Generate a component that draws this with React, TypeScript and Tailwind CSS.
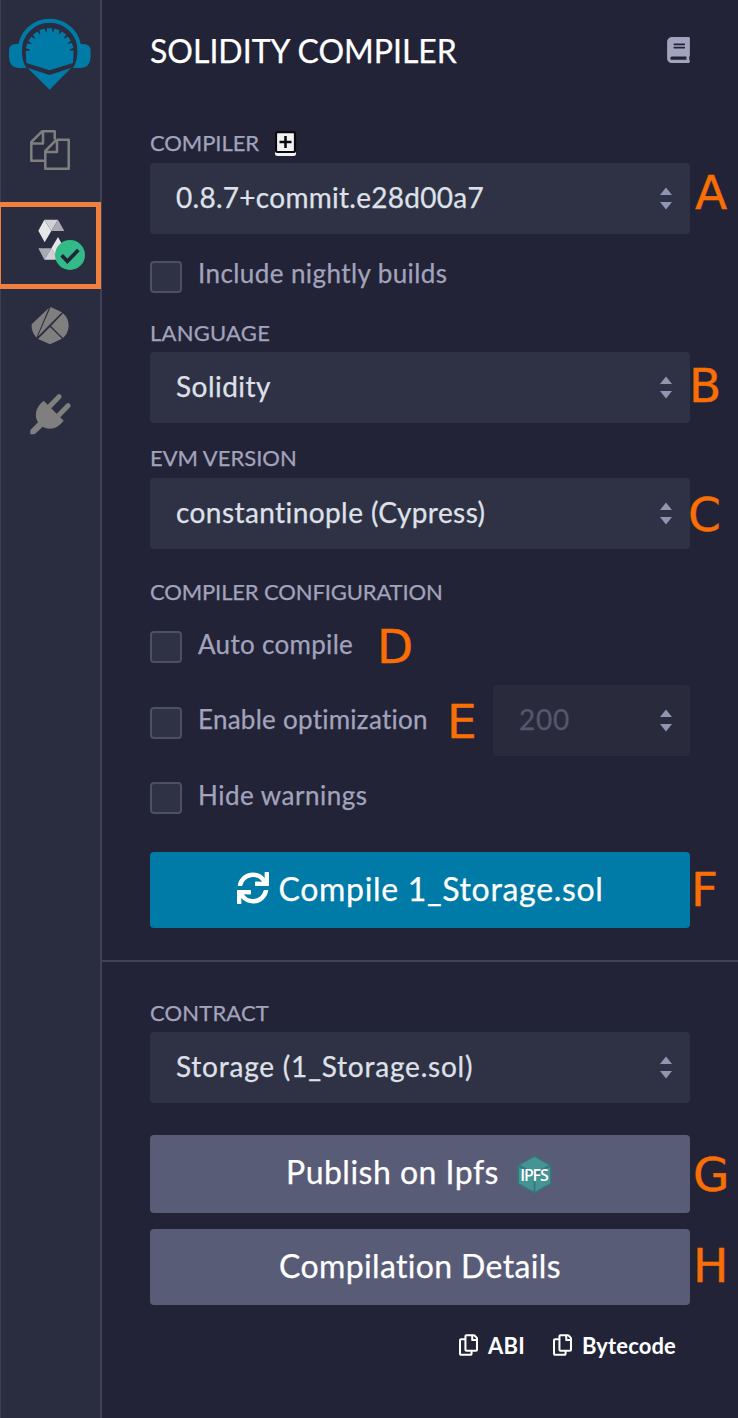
import type { ReactNode } from "react";
import { FaBook, FaRegCopy, FaSync } from "react-icons/fa";

function shellPath() {
  const cx = 149;
  const cy = 156;
  const pts: string[] = [];
  const teeth = 11;
  const start = 190;
  const step = -200 / (teeth - 0.3);
  for (let i = 0; i < teeth; i++) {
    const a = start + step * i;
    const at = (deg: number, r: number) => {
      const t = (deg * Math.PI) / 180;
      return `${(cx + r * Math.cos(t)).toFixed(1)},${(cy - r * Math.sin(t)).toFixed(1)}`;
    };
    pts.push(at(a, 72), at(a + step * 0.66, 72));
    if (i < teeth - 1) pts.push(at(a + step * 0.78, 60), at(a + step * 0.88, 60));
  }
  return `M${pts.join("L")}L219,189L149,211L79,189Z`;
}

function RemixLogo() {
  return (
    <svg className="h-[72px] w-[84px]" viewBox="24 54 252 216" fill="#007aa6">
      <path d="M60 150A89 88 0 0 1 238 150" fill="none" stroke="#007aa6" strokeWidth="12" />
      <path d="M66 132H48Q27 132 27 152V170Q28 203 55 204H79Q64 182 66 145Z" />
      <path d="M232 132H250Q272 132 272 152V170Q270 203 243 204H219Q234 182 232 145Z" />
      <path d={shellPath()} />
      <path d="M82 203L149 225L214 203L149 269Z" />
    </svg>
  );
}

function FilesIcon() {
  return (
    <svg className="h-[40px] w-[40px]" viewBox="0 0 40 40" fill="none" stroke="#7f7f7f" strokeWidth="2.5" strokeLinejoin="round">
      <path d="M24.7 9.5V1.3H12L1.3 12V30.7H15M1.3 13.5H13V1.3" />
      <path d="M26.5 9.7H38.7V38.7H15.3V21L26.5 9.7M15.3 22H27V9.7" />
    </svg>
  );
}

function SolidityIcon() {
  return (
    <svg className="h-[52px] w-[50px]" viewBox="113 88 150 156">
      <path fill="#e6e6e9" d="M117 123L135 90L156 124L136 158Z" />
      <path fill="#d0d0d6" d="M135 90H176L156 124Z" />
      <path fill="#a9aab5" d="M176 90L195 124H156Z" />
      <path fill="#a9aab5" d="M117 176H156L135 210Z" />
      <path fill="#d0d0d6" d="M135 210L156 176L176 210Z" />
      <path fill="#e6e6e9" d="M176 142L195 176L176 210L156 176Z" />
      <circle cx="212" cy="196" r="45" fill="#32ba89" />
      <path d="M187 197L204 215L237 181" fill="none" stroke="#222336" strokeWidth="11" />
    </svg>
  );
}

function KlaytnIcon() {
  return (
    <svg className="h-[38px] w-[38px]" viewBox="94 351 114 114" fill="#7f7f7f">
      <path d="M148 353L96 403Q94 425 110 443Z" />
      <path d="M153 351L187 367L114 440Z" />
      <path d="M190 370Q207 384 207 408Q206 430 190 444L154 408Z" />
      <path d="M151 411L187 446L151 463L115 447Z" />
    </svg>
  );
}

function PlugIcon() {
  return (
    <svg className="h-[41px] w-[41px]" viewBox="89 611 123 123" fill="#7f7f7f">
      <path d="M130 631L190 691Q172 715 148 715Q137 715 127 709L103 732H90V719L113 696Q105 684 107 668Q110 646 130 631Z" />
      <path d="M149 647L176 619M176 674L203 646" stroke="#7f7f7f" strokeWidth="15" strokeLinecap="round" />
    </svg>
  );
}

function VersionAddIcon() {
  return (
    <svg className="h-[25px] w-[22px]" viewBox="0 0 22 25">
      <rect x="0" y="3" width="21" height="22" rx="2.5" fill="#f2f2f2" />
      <rect x="1" y="1.2" width="19" height="19.8" rx="1.5" fill="#f2f2f2" stroke="#0a0a10" strokeWidth="2.2" />
      <path d="M10.5 5V17M4.5 11H16.5" stroke="#0a0a10" strokeWidth="2.6" />
    </svg>
  );
}

function IpfsIcon() {
  return (
    <svg className="h-[39px] w-[35px]" viewBox="0 0 35 39">
      <path d="M17.5 0.5L34.5 10V29L17.5 38.5L0.5 29V10Z" fill="#37777a" />
      <path d="M17.5 2L31.8 10L17.5 18L3.2 10Z" fill="#469394" />
      <path d="M2 12L16.6 20.2V36.5L2 28.3ZM33 12L18.4 20.2V36.5L33 28.3Z" fill="#469394" />
      <text x="17.5" y="26" textAnchor="middle" textLength="28.5" className="fill-white font-['Open_Sans'] text-[16px] font-semibold">
        IPFS
      </text>
    </svg>
  );
}

function SortIcon() {
  return (
    <svg className="mb-px h-[23px] w-[12px]" viewBox="0 0 12 23" fill="#8f95b2">
      <path d="M6 0.5L12 8H0Z" />
      <path d="M0 15H12L6 22.5Z" />
    </svg>
  );
}

function Select({ children }: { children: ReactNode }) {
  return (
    <div className="flex h-[71px] items-center justify-between rounded bg-[#2f3244] pl-[26px] pr-[18px] text-[28px] leading-[34px] text-[#dfe1ea]">
      <div className="pb-[3px]">{children}</div>
      <SortIcon />
    </div>
  );
}

function Check({ children, low = false }: { children: ReactNode; low?: boolean }) {
  return (
    <div className="flex h-8 items-center gap-4 text-[26px] leading-[30px]">
      <div className="h-8 w-8 rounded border-2 border-[#4d4f66] bg-[#2f3244]" />
      <div className={low ? "pb-[6px]" : "pb-[8px]"}>{children}</div>
    </div>
  );
}

const marker =
  "absolute font-['DejaVu_Sans'] text-[47px] leading-[47px] text-[#f96e05] [-webkit-text-stroke:0.4px_#f96e05]";

export default function App() {
  return (
    <div className="relative flex h-[1418px] w-[738px] overflow-hidden bg-[#222336] font-['Lato',sans-serif] text-[#a2a3bd] [-webkit-text-stroke:0.25px_currentColor] [font-variant-ligatures:none]">
      <nav className="flex w-[102px] shrink-0 flex-col items-center border-l border-r-2 border-l-[#3b3e50] border-r-[#3f4255] bg-[#2a2c3f] pr-[2px] pt-[18px]">
        <RemixLogo />
        <div className="mt-[40px]">
          <FilesIcon />
        </div>
        <div className="relative z-10 -ml-[2px] -mr-[3px] mt-[32px] flex h-[87px] w-[102px] shrink-0 justify-center border-[5px] border-l-[2px] border-[#f0803f] pl-[27px] pt-[12px]">
          <SolidityIcon />
        </div>
        <div className="mt-[18px]">
          <KlaytnIcon />
        </div>
        <div className="-mr-[1px] mt-[49px]">
          <PlugIcon />
        </div>
      </nav>

      <main className="flex min-w-0 flex-1 flex-col">
        <section className="flex flex-col px-12">
          <header className="flex h-[99px] items-center justify-between">
            <h1 className="pt-[2px] text-[32px] leading-[38px] tracking-[0px] text-white">SOLIDITY COMPILER</h1>
            <FaBook className="h-[26px] w-[23px]" />
          </header>

          <div className="mt-[23px] flex h-[41px] items-center gap-[16px] text-[22px] leading-[26px]">
            <span className="tracking-[-0.003em]">COMPILER</span>
            <div className="pt-[2px]">
              <VersionAddIcon />
            </div>
          </div>
          <Select><span className="tracking-[0.01em]">0.8.7+commit.e28d00a7</span></Select>
          <div className="mt-[27px]">
            <Check><span className="tracking-[0.016em]">Include nightly builds</span></Check>
          </div>

          <div className="mt-[20px] flex h-[39px] items-center text-[22px] tracking-[0.011em]">LANGUAGE</div>
          <Select><span className="tracking-[0.017em]">Solidity</span></Select>

          <div className="mt-[15px] flex h-[40px] items-center pb-[2px] text-[22px] tracking-[0px]">EVM VERSION</div>
          <Select><span className="tracking-[0.015em]">constantinople (Cypress)</span></Select>

          <div className="mt-[27px] flex h-[31px] items-center text-[22px] tracking-[-0.006em]">COMPILER CONFIGURATION</div>
          <div className="mt-[24px]">
            <Check low><span className="tracking-[0.012em]">Auto compile</span></Check>
          </div>
          <div className="mt-[22px] flex h-[71px] items-center justify-between">
            <div className="pt-[5px]">
              <Check><span className="tracking-[0.01em]">Enable optimization</span></Check>
            </div>
            <div className="flex h-[71px] w-[197px] items-center justify-between rounded bg-[#292b3d] pl-[26px] pr-[18px] text-[28px] leading-[34px] text-[#55576c]">
              <span className="pb-[3px] tracking-[0.027em]">200</span>
              <SortIcon />
            </div>
          </div>
          <div className="mt-[26px]">
            <Check low><span className="tracking-[0.019em]">Hide warnings</span></Check>
          </div>

          <button className="mt-[38px] flex h-[76px] items-center justify-center gap-[10px] rounded bg-[#007aa6] pb-1 text-[32px] leading-[38px] text-white">
            <FaSync className="h-[32px] w-[32px]" />
            <span className="pt-[2px] tracking-[0.021em]">Compile 1_Storage.sol</span>
          </button>
        </section>

        <div className="mt-[32px] h-[2px] bg-[#3f4255]" />

        <section className="flex flex-col px-12">
          <div className="mt-[31px] flex h-[39px] items-center text-[22px] tracking-[0.007em]">CONTRACT</div>
          <Select><span className="tracking-[0.028em]">Storage (1_Storage.sol)</span></Select>
          <button className="mt-[32px] flex h-[78px] items-center justify-center gap-[18px] rounded bg-[#595c76] pr-[2px] text-[32px] leading-[38px] text-white">
            <span className="pb-[4px] tracking-[0.015em]">Publish on Ipfs</span>
            <IpfsIcon />
          </button>
          <button className="mt-[16px] flex h-[76px] items-center justify-center rounded bg-[#595c76] pb-[3px] text-[32px] leading-[38px] tracking-[0.011em] text-white">
            Compilation Details
          </button>
          <div className="mt-[21px] flex h-[39px] items-center justify-end gap-[28px] pr-[14px] text-[22px] font-bold text-white [-webkit-text-stroke:0px]">
            <div className="flex items-center gap-[10px]">
              <FaRegCopy className="mb-[2px] h-[22px] w-[19px]" />
              <span className="tracking-[0.011em]">ABI</span>
            </div>
            <div className="flex items-center gap-[10px]">
              <FaRegCopy className="mb-[2px] h-[22px] w-[19px]" />
              <span className="tracking-[0.006em]">Bytecode</span>
            </div>
          </div>
        </section>
      </main>

      <div className={`${marker} left-[695px] top-[169px]`}>A</div>
      <div className={`${marker} left-[689px] top-[362px]`}>B</div>
      <div className={`${marker} left-[688px] top-[491px]`}>C</div>
      <div className={`${marker} left-[377px] top-[623px]`}>D</div>
      <div className={`${marker} left-[447px] top-[698px]`}>E</div>
      <div className={`${marker} left-[691px] top-[866px]`}>F</div>
      <div className={`${marker} left-[693px] top-[1151px]`}>G</div>
      <div className={`${marker} left-[693px] top-[1242px]`}>H</div>
    </div>
  );
}
